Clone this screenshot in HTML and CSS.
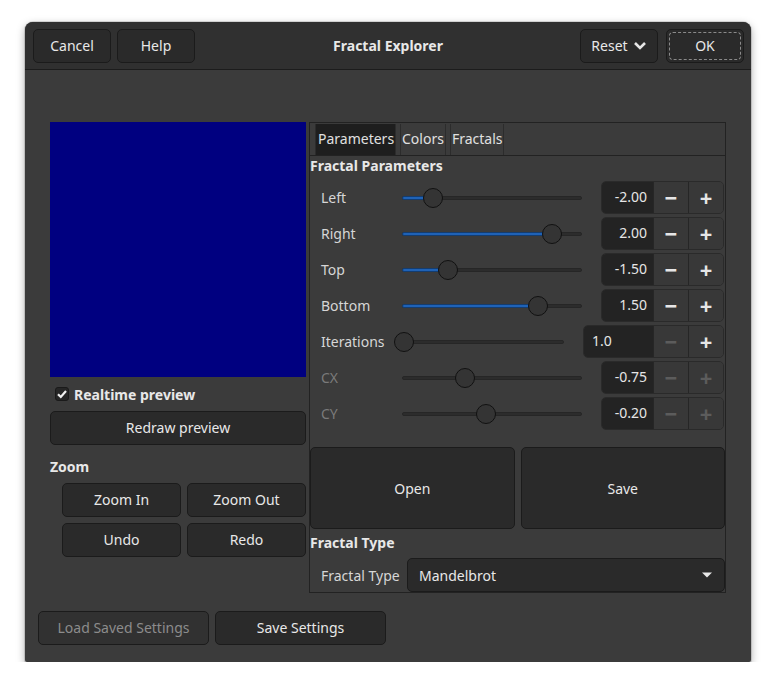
FILE: index.html
```html
<!DOCTYPE html>
<html>
<head>
<meta charset="utf-8">
<link rel="stylesheet" href="styles.css">
</head>
<body>
<div class="window">
  <div class="header">
    <div class="hgroup">
      <button class="btn hbtn">Cancel</button>
      <button class="btn hbtn">Help</button>
    </div>
    <div class="title">Fractal Explorer</div>
    <div class="hgroup right">
      <button class="btn hbtn reset">Reset <svg width="14" height="10" viewBox="0 0 14 10"><path d="M2 2 L7 7 L12 2" fill="none" stroke="#e6e6e6" stroke-width="2.6" stroke-linejoin="miter"/></svg></button>
      <button class="btn hbtn ok"><span class="focus">OK</span></button>
    </div>
  </div>
  <div class="main">
    <div class="leftcol">
      <div class="preview"></div>
      <div class="check-row">
        <span class="checkbox"><svg width="12" height="12" viewBox="0 0 12 12"><path d="M2 6.2 L4.8 9 L10 3" fill="none" stroke="#f0f0f0" stroke-width="2.2"/></svg></span>
        <span class="bold">Realtime preview</span>
      </div>
      <button class="btn wide">Redraw preview</button>
      <div class="section bold">Zoom</div>
      <div class="zoomgrid">
        <button class="btn">Zoom In</button>
        <button class="btn">Zoom Out</button>
        <button class="btn">Undo</button>
        <button class="btn">Redo</button>
      </div>
    </div>
    <div class="notebook">
      <div class="tabs">
        <div class="tab active">Parameters</div>
        <div class="tab">Colors</div>
        <div class="tab">Fractals</div>
      </div>
      <div class="page">
        <div class="ptitle bold">Fractal Parameters</div>
        <div class="rows">
          <div class="row">
            <span class="lbl">Left</span>
            <div class="slider"><div class="track"><div class="fill" style="width:30px"></div><div class="knob" style="left:30px"></div></div></div>
            <div class="spin"><span class="entry">-2.00</span><span class="sb">−</span><span class="sb">+</span></div>
          </div>
          <div class="row">
            <span class="lbl">Right</span>
            <div class="slider"><div class="track"><div class="fill" style="width:149px"></div><div class="knob" style="left:149px"></div></div></div>
            <div class="spin"><span class="entry">2.00</span><span class="sb">−</span><span class="sb">+</span></div>
          </div>
          <div class="row">
            <span class="lbl">Top</span>
            <div class="slider"><div class="track"><div class="fill" style="width:45px"></div><div class="knob" style="left:45px"></div></div></div>
            <div class="spin"><span class="entry">-1.50</span><span class="sb">−</span><span class="sb">+</span></div>
          </div>
          <div class="row">
            <span class="lbl">Bottom</span>
            <div class="slider"><div class="track"><div class="fill" style="width:135px"></div><div class="knob" style="left:135px"></div></div></div>
            <div class="spin"><span class="entry">1.50</span><span class="sb">−</span><span class="sb">+</span></div>
          </div>
          <div class="row">
            <span class="lbl">Iterations</span>
            <div class="slider"><div class="track"><div class="knob" style="left:1px"></div></div></div>
            <div class="spin widespin"><span class="entry left">1.0</span><span class="sb dis">−</span><span class="sb">+</span></div>
          </div>
          <div class="row">
            <span class="lbl dis">CX</span>
            <div class="slider"><div class="track"><div class="knob" style="left:62px"></div></div></div>
            <div class="spin"><span class="entry">-0.75</span><span class="sb dis">−</span><span class="sb dis">+</span></div>
          </div>
          <div class="row">
            <span class="lbl dis">CY</span>
            <div class="slider"><div class="track"><div class="knob" style="left:83px"></div></div></div>
            <div class="spin"><span class="entry">-0.20</span><span class="sb dis">−</span><span class="sb dis">+</span></div>
          </div>
        </div>
        <div class="bigbtns">
          <button class="btn big">Open</button>
          <button class="btn big">Save</button>
        </div>
        <div class="ptitle bold type">Fractal Type</div>
        <div class="combo-row">
          <span class="clbl">Fractal Type</span>
          <div class="combo"><span>Mandelbrot</span><svg width="12" height="8" viewBox="0 0 12 8"><path d="M1 1.5 L11 1.5 L6 6.5 Z" fill="#e8e8e8"/></svg></div>
        </div>
      </div>
    </div>
  </div>
  <div class="footer">
    <button class="btn fbtn disabled">Load Saved Settings</button>
    <button class="btn fbtn">Save Settings</button>
  </div>
</div>
</body>
</html>
```
FILE: styles.css
```css
* { box-sizing: border-box; }
html, body { margin: 0; padding: 0; background: #ffffff; }
body {
  font-family: "Noto Sans", "Open Sans", sans-serif;
  font-size: 14px;
  color: #e8e8e8;
  padding: 22px 0 0 25px;
}
.bold { font-weight: bold; }
.window {
  width: 726px;
  height: 640px;
  background: #3b3b3b;
  border-radius: 8px 8px 2px 2px;
  box-shadow: 0 3px 9px rgba(0,0,0,0.35), 0 0 0 1px rgba(0,0,0,0.12);
  display: flex;
  flex-direction: column;
}
.header {
  height: 48px;
  background: #303030;
  border-radius: 8px 8px 0 0;
  border-bottom: 1px solid #1c1c1c;
  display: flex;
  align-items: center;
  justify-content: space-between;
  padding: 0 7px 0 8px;
  position: relative;
}
.hgroup { display: flex; gap: 6px; }
.hgroup.right { gap: 8px; }
.title {
  font-weight: bold;
  position: absolute;
  left: 0; right: 0;
  text-align: center;
  pointer-events: none;
}
.btn {
  font-family: inherit;
  font-size: 14px;
  color: #e8e8e8;
  background: #2a2a2a;
  border: 1px solid #1b1b1b;
  border-radius: 5px;
  height: 34px;
  padding: 0 0 1px 0;
  display: flex;
  align-items: center;
  justify-content: center;
}
.hbtn { width: 78px; position: relative; z-index: 1; }
.reset { width: 78px; gap: 5px; }
.reset svg { margin-top: 1px; }
.ok { width: 78px; padding: 2px; }
.ok .focus {
  display: flex; align-items: center; justify-content: center;
  width: 100%; height: 100%;
  border: 1px dashed #8a8a8a;
  border-radius: 4px;
}
.main {
  display: flex;
  gap: 3px;
  padding: 52px 26px 0 25px;
}
.leftcol { width: 256px; display: flex; flex-direction: column; }
.preview { width: 256px; height: 255px; background: #000080; }
.check-row {
  height: 34px;
  display: flex;
  align-items: center;
  padding-left: 5px;
  gap: 5px;
}
.checkbox {
  width: 14px; height: 14px;
  background: #262626;
  border: 1px solid #1a1a1a;
  border-radius: 3px;
  display: flex; align-items: center; justify-content: center;
}
.wide { width: 256px; }
.section { margin-top: 12px; height: 20px; line-height: 19px; }
.zoomgrid {
  margin-top: 6px;
  padding-left: 12px;
  display: grid;
  grid-template-columns: 119px 119px;
  gap: 6px 6px;
}
.zoomgrid .btn { width: 119px; }
.notebook {
  width: 417px;
  height: 471px;
  border: 1px solid #222;
  display: flex;
  flex-direction: column;
}
.tabs {
  height: 33px;
  border-bottom: 1px solid #222;
  display: flex;
  padding: 1px 0 0 5px;
  gap: 4px;
}
.tab {
  height: 31px;
  line-height: 29px;
  padding: 0 1px;
  border-left: 1px solid #2c2c2c;
  border-right: 1px solid #2c2c2c;
  color: #e0e0e0;
}
.tab.active { background: #1e1e1e; padding: 0 1px 0 2px; width: 81px; }
.page { padding: 0; display: flex; flex-direction: column; }
.ptitle { height: 20px; line-height: 19px; margin-top: 0; }
.rows {
  display: flex;
  flex-direction: column;
  gap: 3px;
  margin-top: 5px;
  padding: 0 1px 0 11px;
}
.row { display: flex; align-items: center; height: 33px; }
.lbl { width: 81px; color: #d6d6d6; line-height: 31px; }
.lbl.dis { color: #7a7a7a; }
.slider { flex: 1; margin-right: 19px; display: flex; align-items: center; }
.track {
  position: relative;
  width: 100%;
  height: 4px;
  background: #2c2c2c;
  border: 1px solid #262626;
  border-radius: 2px;
}
.fill {
  position: absolute;
  left: -1px; top: -1px;
  height: 4px;
  background: #1f62b6;
  border: 1px solid #143d70;
  border-radius: 2px;
}
.knob {
  position: absolute;
  top: 50%;
  width: 20px; height: 20px;
  margin: -10px 0 0 -10px;
  border-radius: 50%;
  background: #343434;
  border: 1px solid #111;
}
.spin {
  display: flex;
  width: 123px;
  height: 33px;
  border: 1px solid #2a2a2a;
  border-radius: 5px;
  overflow: hidden;
}
.spin.widespin { width: 141px; }
.entry {
  flex: 1;
  background: #232323;
  text-align: right;
  padding-right: 6px;
  line-height: 29px;
  color: #e6e6e6;
}
.entry.left { text-align: left; padding-left: 8px; }
.sb {
  width: 35px;
  border-left: 1px solid #262626;
  background: #383838;
  text-align: center;
  line-height: 30px;
  font-size: 22px;
  font-weight: bold;
  color: #e6e6e6;
}
.sb.dis { color: #5c5c5c; }
.bigbtns {
  display: flex;
  gap: 6px;
  margin-top: 17px;
}
.big { width: 205px; height: 82px; padding: 0; }
.type { margin-top: 4px; }
.combo-row {
  display: flex;
  align-items: center;
  margin-top: 5px;
  padding-left: 11px;
}
.clbl { width: 86px; color: #d6d6d6; }
.combo {
  flex: 1;
  height: 34px;
  background: #2a2a2a;
  border: 1px solid #1b1b1b;
  border-radius: 5px;
  display: flex;
  align-items: center;
  justify-content: space-between;
  padding: 0 11px 0 11px;
  color: #e8e8e8;
}
.footer {
  display: flex;
  gap: 6px;
  margin-top: 18px;
  padding-left: 13px;
}
.fbtn { width: 171px; }
.fbtn.disabled { color: #8c8c8c; background: #313131; }
```
